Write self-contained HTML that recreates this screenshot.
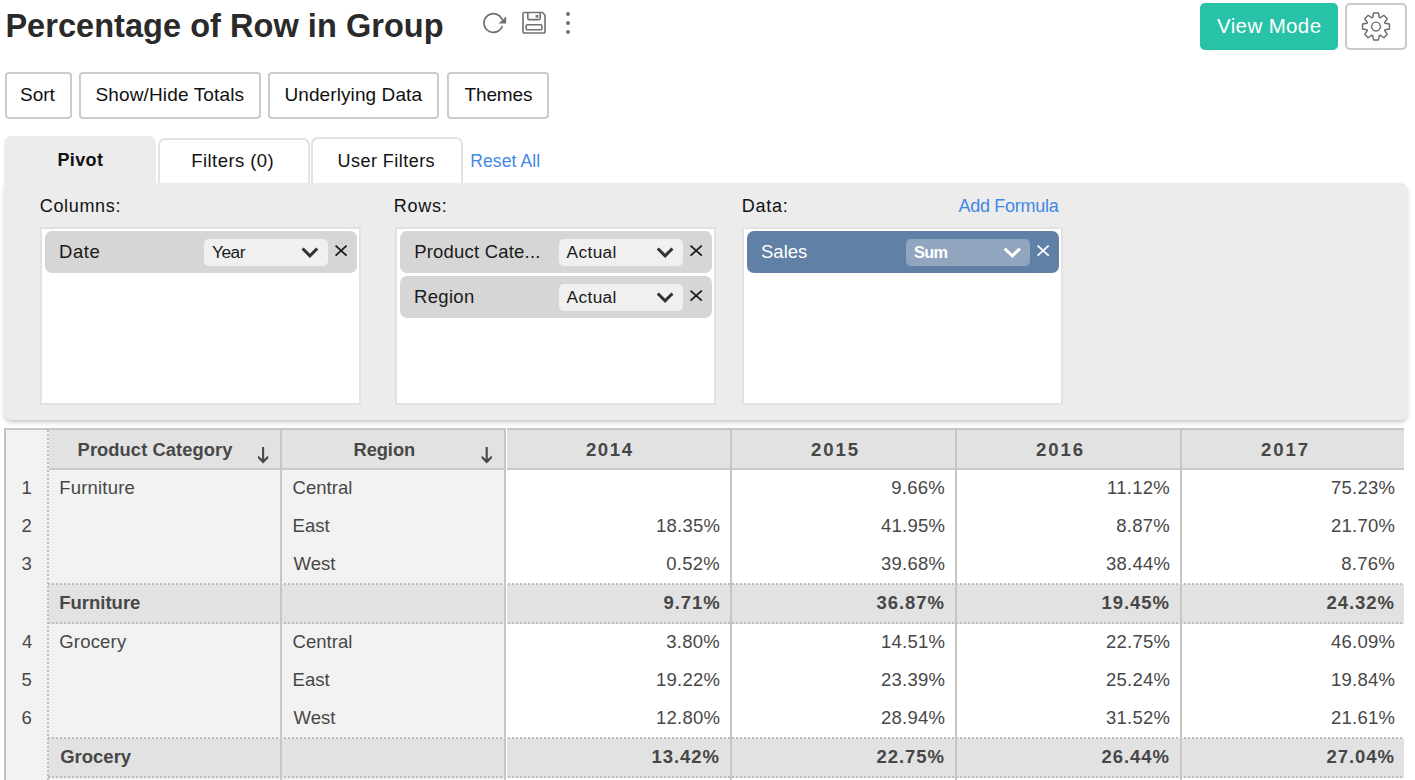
<!DOCTYPE html>
<html><head><meta charset="utf-8"><title>Percentage of Row in Group</title>
<style>
html,body{margin:0;padding:0;background:#fff;}
body{width:1415px;height:780px;overflow:hidden;position:relative;font-family:"Liberation Sans",sans-serif;}
.r{position:absolute;}
.t{position:absolute;white-space:nowrap;line-height:1;font-family:"Liberation Sans",sans-serif;}
svg.r{overflow:visible}
</style></head><body>
<div class="t" style="left:5.40px;top:10.00px;font-size:32.5px;font-weight:bold;letter-spacing:0.048px;color:#2a2a2a;">Percentage of Row in Group</div>
<svg class="r" style="left:0;top:0" width="600" height="50" viewBox="0 0 600 50">
<path d="M502.3 25.9 A9.35 9.35 0 1 1 502.22 19.9" fill="none" stroke="#707070" stroke-width="1.7"/>
<path d="M498.6 23.6 L506.2 23.6 L506.2 16.6 Z" fill="#707070"/>
<path d="M523.0 13.4 Q523.0 12.5 523.9 12.5 L542.4 12.5 L545.0 15.1 L545.0 32.1 Q545.0 33.0 544.1 33.0 L523.9 33.0 Q523.0 33.0 523.0 32.1 Z" fill="none" stroke="#707070" stroke-width="1.6"/>
<path d="M527.8 12.5 L527.8 18.6 Q527.8 19.6 528.8 19.6 L539.2 19.6 Q540.2 19.6 540.2 18.6 L540.2 12.5" fill="none" stroke="#707070" stroke-width="1.6"/>
<rect x="535.6" y="15.0" width="2.8" height="2.6" fill="#707070"/>
<rect x="526.1" y="24.8" width="15.8" height="5.0" rx="1.2" fill="none" stroke="#707070" stroke-width="1.6"/>
<circle cx="568" cy="14" r="2" fill="#707070"/>
<circle cx="568" cy="23" r="2" fill="#707070"/>
<circle cx="568" cy="32" r="2" fill="#707070"/>
</svg>
<div class="r" style="left:1200px;top:3px;width:138px;height:47px;background:#27c2a8;border-radius:5px"></div>
<div class="t" style="left:1217.00px;top:16.40px;font-size:20.5px;font-weight:normal;letter-spacing:0.375px;color:#ffffff;">View Mode</div>
<div class="r" style="left:1345px;top:3px;width:62px;height:47px;box-sizing:border-box;border:2px solid #c9c9c9;border-radius:5px;background:#fff"></div>
<svg class="r" style="left:0;top:0" width="1415" height="60" viewBox="0 0 1415 60">
<path d="M1372.33 17.63 L1372.67 17.50 L1373.56 13.02 L1378.44 13.02 L1379.33 17.50 L1379.67 17.63 L1380.01 17.78 L1383.81 15.24 L1387.26 18.69 L1384.72 22.49 L1384.87 22.83 L1385.00 23.17 L1389.48 24.06 L1389.48 28.94 L1385.00 29.83 L1384.87 30.17 L1384.72 30.51 L1387.26 34.31 L1383.81 37.76 L1380.01 35.22 L1379.67 35.37 L1379.33 35.50 L1378.44 39.98 L1373.56 39.98 L1372.67 35.50 L1372.33 35.37 L1371.99 35.22 L1368.19 37.76 L1364.74 34.31 L1367.28 30.51 L1367.13 30.17 L1367.00 29.83 L1362.52 28.94 L1362.52 24.06 L1367.00 23.17 L1367.13 22.83 L1367.28 22.49 L1364.74 18.69 L1368.19 15.24 L1371.99 17.78 Z" fill="none" stroke="#6e6e6e" stroke-width="1.45" stroke-linejoin="round"/>
<circle cx="1376" cy="26.5" r="4.4" fill="none" stroke="#6e6e6e" stroke-width="1.45"/>
</svg>
<div class="r" style="left:5px;top:72px;width:67px;height:47px;box-sizing:border-box;border:2px solid #cbcbcb;border-radius:4px;background:#fff"></div>
<div class="t" style="left:20.00px;top:85.00px;font-size:19px;font-weight:normal;letter-spacing:0.000px;color:#111;">Sort</div>
<div class="r" style="left:79px;top:72px;width:182px;height:47px;box-sizing:border-box;border:2px solid #cbcbcb;border-radius:4px;background:#fff"></div>
<div class="t" style="left:95.40px;top:85.00px;font-size:19px;font-weight:normal;letter-spacing:0.147px;color:#111;">Show/Hide Totals</div>
<div class="r" style="left:268px;top:72px;width:171px;height:47px;box-sizing:border-box;border:2px solid #cbcbcb;border-radius:4px;background:#fff"></div>
<div class="t" style="left:284.40px;top:85.00px;font-size:19px;font-weight:normal;letter-spacing:0.100px;color:#111;">Underlying Data</div>
<div class="r" style="left:447px;top:72px;width:102px;height:47px;box-sizing:border-box;border:2px solid #cbcbcb;border-radius:4px;background:#fff"></div>
<div class="t" style="left:464.60px;top:85.00px;font-size:19px;font-weight:normal;letter-spacing:-0.160px;color:#111;">Themes</div>
<div class="r" style="left:4px;top:136px;width:152px;height:54px;background:#ececec;border-radius:7px 7px 0 0"></div>
<div class="r" style="left:158px;top:138px;width:152px;height:52px;box-sizing:border-box;border:2px solid #e2e2e2;border-bottom:none;border-radius:7px 7px 0 0;background:#fff"></div>
<div class="r" style="left:311px;top:137px;width:152px;height:53px;box-sizing:border-box;border:2px solid #e2e2e2;border-bottom:none;border-radius:7px 7px 0 0;background:#fff"></div>
<div class="t" style="left:57.40px;top:151.30px;font-size:18px;font-weight:bold;letter-spacing:0.400px;color:#111;">Pivot</div>
<div class="t" style="left:191.30px;top:151.60px;font-size:18.5px;font-weight:normal;letter-spacing:0.430px;color:#111;">Filters (0)</div>
<div class="t" style="left:337.60px;top:151.80px;font-size:18px;font-weight:normal;letter-spacing:0.455px;color:#111;">User Filters</div>
<div class="t" style="left:470.30px;top:153.00px;font-size:17.5px;font-weight:normal;letter-spacing:0.087px;color:#4288e4;">Reset All</div>
<div class="r" style="left:4px;top:183px;width:1404px;height:237px;background:#ececec;border-radius:0 8px 8px 8px;box-shadow:0 3px 5px -1px rgba(0,0,0,0.24)"></div>
<div class="t" style="left:39.80px;top:197.20px;font-size:18px;font-weight:normal;letter-spacing:0.657px;color:#111;">Columns:</div>
<div class="t" style="left:393.80px;top:197.20px;font-size:18px;font-weight:normal;letter-spacing:0.750px;color:#111;">Rows:</div>
<div class="t" style="left:741.70px;top:197.20px;font-size:18px;font-weight:normal;letter-spacing:0.750px;color:#111;">Data:</div>
<div class="t" style="left:958.50px;top:197.20px;font-size:18px;font-weight:normal;letter-spacing:-0.290px;color:#4288e4;">Add Formula</div>
<div class="r" style="left:40px;top:227px;width:321px;height:178px;box-sizing:border-box;border:2px solid #e2e2e2;background:#fff"></div>
<div class="r" style="left:395px;top:227px;width:321px;height:178px;box-sizing:border-box;border:2px solid #e2e2e2;background:#fff"></div>
<div class="r" style="left:742px;top:227px;width:321px;height:178px;box-sizing:border-box;border:2px solid #e2e2e2;background:#fff"></div>
<div class="r" style="left:45px;top:231px;width:312px;height:42px;background:#d6d6d6;border-radius:7px"></div>
<div class="r" style="left:204px;top:239px;width:124px;height:27px;background:#f0f0f0;border-radius:5px"></div>
<div class="t" style="left:59.00px;top:243.20px;font-size:18.5px;font-weight:normal;letter-spacing:0.567px;color:#1a1a1a;">Date</div>
<div class="t" style="left:212.00px;top:243.90px;font-size:17.3px;font-weight:normal;letter-spacing:-0.500px;color:#1a1a1a;">Year</div>
<div class="r" style="left:400px;top:231px;width:312px;height:42px;background:#d6d6d6;border-radius:7px"></div>
<div class="r" style="left:559px;top:239px;width:124px;height:27px;background:#f0f0f0;border-radius:5px"></div>
<div class="t" style="left:414.20px;top:243.20px;font-size:18.5px;font-weight:normal;letter-spacing:0.200px;color:#1a1a1a;">Product Cate...</div>
<div class="t" style="left:566.60px;top:243.90px;font-size:17.3px;font-weight:normal;letter-spacing:0.360px;color:#1a1a1a;">Actual</div>
<div class="r" style="left:400px;top:276px;width:312px;height:42px;background:#d6d6d6;border-radius:7px"></div>
<div class="r" style="left:559px;top:284px;width:124px;height:27px;background:#f0f0f0;border-radius:5px"></div>
<div class="t" style="left:414.00px;top:288.20px;font-size:18.5px;font-weight:normal;letter-spacing:0.320px;color:#1a1a1a;">Region</div>
<div class="t" style="left:566.60px;top:288.90px;font-size:17.3px;font-weight:normal;letter-spacing:0.360px;color:#1a1a1a;">Actual</div>
<div class="r" style="left:747px;top:231px;width:312px;height:42px;background:#6080a6;border-radius:7px"></div>
<div class="r" style="left:906px;top:239px;width:124px;height:27px;background:#91a6be;border-radius:5px"></div>
<div class="t" style="left:761.00px;top:243.20px;font-size:18.5px;font-weight:normal;letter-spacing:0.000px;color:#ffffff;">Sales</div>
<div class="t" style="left:914.00px;top:243.50px;font-size:16.3px;font-weight:bold;letter-spacing:-0.700px;color:#ffffff;">Sum</div>
<svg class="r" style="left:0;top:0" width="1415" height="420" viewBox="0 0 1415 420"><path d="M302.56 248.56 L309.90 255.88 L317.24 248.56" fill="none" stroke="#333333" stroke-width="3.0" stroke-linecap="butt" stroke-linejoin="miter"/><path d="M335.6 245.6 L346.6 255.6 M346.6 245.6 L335.6 255.6" fill="none" stroke="#1a1a1a" stroke-width="1.8"/><path d="M657.76 248.56 L665.10 255.88 L672.44 248.56" fill="none" stroke="#333333" stroke-width="3.0" stroke-linecap="butt" stroke-linejoin="miter"/><path d="M690.5 245.6 L701.8 255.6 M701.8 245.6 L690.5 255.6" fill="none" stroke="#1a1a1a" stroke-width="1.8"/><path d="M657.76 293.56 L665.10 300.88 L672.44 293.56" fill="none" stroke="#333333" stroke-width="3.0" stroke-linecap="butt" stroke-linejoin="miter"/><path d="M690.5 290.6 L701.8 300.6 M701.8 290.6 L690.5 300.6" fill="none" stroke="#1a1a1a" stroke-width="1.8"/><path d="M1004.66 248.56 L1012.30 255.88 L1019.94 248.56" fill="none" stroke="#ffffff" stroke-width="3.0" stroke-linecap="butt" stroke-linejoin="miter"/><path d="M1037.6 245.6 L1048.7 255.6 M1048.7 245.6 L1037.6 255.6" fill="none" stroke="#ffffff" stroke-width="1.8"/></svg>
<div class="r" style="left:4px;top:428px;width:1400px;height:352px;background:#fff"></div>
<div class="r" style="left:4px;top:428px;width:2px;height:352px;background:#c2c2c2"></div>
<div class="r" style="left:4px;top:428px;width:1400px;height:2px;background:#c6c6c6"></div>
<div class="r" style="left:6px;top:430px;width:42px;height:350px;background:#f2f2f2"></div>
<div class="r" style="left:49px;top:430px;width:1355px;height:38px;background:#e2e2e2"></div>
<div class="r" style="left:48px;top:468px;width:1356px;height:2px;background:#c9c9c9"></div>
<div class="r" style="left:48px;top:470px;width:457px;height:310px;background:#f2f2f2"></div>
<div class="r" style="left:48px;top:430px;width:1px;height:40px;background:#f2f2f2"></div>
<div class="r" style="left:48px;top:584px;width:1356px;height:40px;background:#e2e2e2"></div>
<div class="r" style="left:48px;top:583px;width:1356px;height:2px;background-image:repeating-linear-gradient(90deg,#bdbdbd 0 2px,transparent 2px 4px)"></div>
<div class="r" style="left:48px;top:622px;width:1356px;height:2px;background-image:repeating-linear-gradient(90deg,#bdbdbd 0 2px,transparent 2px 4px)"></div>
<div class="r" style="left:48px;top:738px;width:1356px;height:40px;background:#e2e2e2"></div>
<div class="r" style="left:48px;top:737px;width:1356px;height:2px;background-image:repeating-linear-gradient(90deg,#bdbdbd 0 2px,transparent 2px 4px)"></div>
<div class="r" style="left:48px;top:776px;width:1356px;height:2px;background-image:repeating-linear-gradient(90deg,#bdbdbd 0 2px,transparent 2px 4px)"></div>
<div class="r" style="left:47px;top:430px;width:2px;height:350px;background-image:repeating-linear-gradient(180deg,#bdbdbd 0 2px,transparent 2px 4px)"></div>
<div class="r" style="left:280px;top:430px;width:2px;height:350px;background:#c6c6c6"></div>
<div class="r" style="left:504px;top:430px;width:2px;height:350px;background:#c6c6c6"></div>
<div class="r" style="left:730px;top:430px;width:2px;height:350px;background:#c6c6c6"></div>
<div class="r" style="left:955px;top:430px;width:2px;height:350px;background:#c6c6c6"></div>
<div class="r" style="left:1180px;top:430px;width:2px;height:350px;background:#c6c6c6"></div>
<div class="r" style="left:506px;top:428px;width:1px;height:352px;background:#fff"></div>
<div class="t" style="left:77.60px;top:440.90px;font-size:18.3px;font-weight:bold;letter-spacing:0.093px;color:#474747;">Product Category</div>
<div class="t" style="left:353.50px;top:440.90px;font-size:18.3px;font-weight:bold;letter-spacing:-0.060px;color:#474747;">Region</div>
<div class="t" style="left:585.90px;top:440.80px;font-size:18.6px;font-weight:bold;letter-spacing:1.633px;color:#474747;">2014</div>
<div class="t" style="left:810.90px;top:440.80px;font-size:18.6px;font-weight:bold;letter-spacing:1.967px;color:#474747;">2015</div>
<div class="t" style="left:1035.90px;top:440.80px;font-size:18.6px;font-weight:bold;letter-spacing:1.967px;color:#474747;">2016</div>
<div class="t" style="left:1260.90px;top:440.80px;font-size:18.6px;font-weight:bold;letter-spacing:1.967px;color:#474747;">2017</div>
<svg class="r" style="left:0;top:420px" width="1415" height="60" viewBox="0 420 1415 60"><rect x="262.05" y="447" width="2.1" height="13" fill="#474747"/><path d="M258.00 455.6 L263.10 459.9 L268.20 455.6 L268.20 458.3 L263.10 463.6 L258.00 458.3 Z" fill="#474747"/><rect x="485.65" y="447" width="2.1" height="13" fill="#474747"/><path d="M481.60 455.6 L486.70 459.9 L491.80 455.6 L491.80 458.3 L486.70 463.6 L481.60 458.3 Z" fill="#474747"/></svg>
<div class="t" style="left:21.50px;top:479.20px;font-size:18.5px;font-weight:normal;letter-spacing:0.000px;color:#474747;">1</div>
<div class="t" style="left:59.20px;top:479.20px;font-size:18.5px;font-weight:normal;letter-spacing:0.200px;color:#474747;">Furniture</div>
<div class="t" style="left:292.50px;top:479.20px;font-size:18.5px;font-weight:normal;letter-spacing:0.050px;color:#474747;">Central</div>
<div class="t" style="left:891.30px;top:479.20px;font-size:18.5px;font-weight:normal;letter-spacing:0.250px;color:#474747;">9.66%</div>
<div class="t" style="left:1107.05px;top:479.20px;font-size:18.5px;font-weight:normal;letter-spacing:0.250px;color:#474747;">11.12%</div>
<div class="t" style="left:1331.05px;top:479.20px;font-size:18.5px;font-weight:normal;letter-spacing:0.250px;color:#474747;">75.23%</div>
<div class="t" style="left:21.50px;top:517.20px;font-size:18.5px;font-weight:normal;letter-spacing:0.000px;color:#474747;">2</div>
<div class="t" style="left:292.50px;top:517.20px;font-size:18.5px;font-weight:normal;letter-spacing:0.050px;color:#474747;">East</div>
<div class="t" style="left:656.05px;top:517.20px;font-size:18.5px;font-weight:normal;letter-spacing:0.250px;color:#474747;">18.35%</div>
<div class="t" style="left:881.05px;top:517.20px;font-size:18.5px;font-weight:normal;letter-spacing:0.250px;color:#474747;">41.95%</div>
<div class="t" style="left:1116.30px;top:517.20px;font-size:18.5px;font-weight:normal;letter-spacing:0.250px;color:#474747;">8.87%</div>
<div class="t" style="left:1331.05px;top:517.20px;font-size:18.5px;font-weight:normal;letter-spacing:0.250px;color:#474747;">21.70%</div>
<div class="t" style="left:21.50px;top:555.20px;font-size:18.5px;font-weight:normal;letter-spacing:0.000px;color:#474747;">3</div>
<div class="t" style="left:293.50px;top:555.20px;font-size:18.5px;font-weight:normal;letter-spacing:0.050px;color:#474747;">West</div>
<div class="t" style="left:666.30px;top:555.20px;font-size:18.5px;font-weight:normal;letter-spacing:0.250px;color:#474747;">0.52%</div>
<div class="t" style="left:881.05px;top:555.20px;font-size:18.5px;font-weight:normal;letter-spacing:0.250px;color:#474747;">39.68%</div>
<div class="t" style="left:1106.05px;top:555.20px;font-size:18.5px;font-weight:normal;letter-spacing:0.250px;color:#474747;">38.44%</div>
<div class="t" style="left:1341.30px;top:555.20px;font-size:18.5px;font-weight:normal;letter-spacing:0.250px;color:#474747;">8.76%</div>
<div class="t" style="left:59.20px;top:593.70px;font-size:18.5px;font-weight:bold;letter-spacing:0.000px;color:#474747;">Furniture</div>
<div class="t" style="left:663.50px;top:593.70px;font-size:18.5px;font-weight:bold;letter-spacing:0.950px;color:#474747;">9.71%</div>
<div class="t" style="left:876.55px;top:593.70px;font-size:18.5px;font-weight:bold;letter-spacing:0.950px;color:#474747;">36.87%</div>
<div class="t" style="left:1101.55px;top:593.70px;font-size:18.5px;font-weight:bold;letter-spacing:0.950px;color:#474747;">19.45%</div>
<div class="t" style="left:1326.55px;top:593.70px;font-size:18.5px;font-weight:bold;letter-spacing:0.950px;color:#474747;">24.32%</div>
<div class="t" style="left:22.00px;top:632.80px;font-size:18.5px;font-weight:normal;letter-spacing:0.000px;color:#474747;">4</div>
<div class="t" style="left:59.20px;top:632.80px;font-size:18.5px;font-weight:normal;letter-spacing:0.200px;color:#474747;">Grocery</div>
<div class="t" style="left:292.50px;top:632.80px;font-size:18.5px;font-weight:normal;letter-spacing:0.050px;color:#474747;">Central</div>
<div class="t" style="left:666.30px;top:632.80px;font-size:18.5px;font-weight:normal;letter-spacing:0.250px;color:#474747;">3.80%</div>
<div class="t" style="left:881.05px;top:632.80px;font-size:18.5px;font-weight:normal;letter-spacing:0.250px;color:#474747;">14.51%</div>
<div class="t" style="left:1106.05px;top:632.80px;font-size:18.5px;font-weight:normal;letter-spacing:0.250px;color:#474747;">22.75%</div>
<div class="t" style="left:1331.05px;top:632.80px;font-size:18.5px;font-weight:normal;letter-spacing:0.250px;color:#474747;">46.09%</div>
<div class="t" style="left:21.50px;top:670.80px;font-size:18.5px;font-weight:normal;letter-spacing:0.000px;color:#474747;">5</div>
<div class="t" style="left:292.50px;top:670.80px;font-size:18.5px;font-weight:normal;letter-spacing:0.050px;color:#474747;">East</div>
<div class="t" style="left:656.05px;top:670.80px;font-size:18.5px;font-weight:normal;letter-spacing:0.250px;color:#474747;">19.22%</div>
<div class="t" style="left:881.05px;top:670.80px;font-size:18.5px;font-weight:normal;letter-spacing:0.250px;color:#474747;">23.39%</div>
<div class="t" style="left:1106.05px;top:670.80px;font-size:18.5px;font-weight:normal;letter-spacing:0.250px;color:#474747;">25.24%</div>
<div class="t" style="left:1331.05px;top:670.80px;font-size:18.5px;font-weight:normal;letter-spacing:0.250px;color:#474747;">19.84%</div>
<div class="t" style="left:21.50px;top:708.90px;font-size:18.5px;font-weight:normal;letter-spacing:0.000px;color:#474747;">6</div>
<div class="t" style="left:293.50px;top:708.90px;font-size:18.5px;font-weight:normal;letter-spacing:0.050px;color:#474747;">West</div>
<div class="t" style="left:656.05px;top:708.90px;font-size:18.5px;font-weight:normal;letter-spacing:0.250px;color:#474747;">12.80%</div>
<div class="t" style="left:881.05px;top:708.90px;font-size:18.5px;font-weight:normal;letter-spacing:0.250px;color:#474747;">28.94%</div>
<div class="t" style="left:1106.05px;top:708.90px;font-size:18.5px;font-weight:normal;letter-spacing:0.250px;color:#474747;">31.52%</div>
<div class="t" style="left:1331.05px;top:708.90px;font-size:18.5px;font-weight:normal;letter-spacing:0.250px;color:#474747;">21.61%</div>
<div class="t" style="left:60.20px;top:747.80px;font-size:18.5px;font-weight:bold;letter-spacing:0.000px;color:#474747;">Grocery</div>
<div class="t" style="left:651.55px;top:747.80px;font-size:18.5px;font-weight:bold;letter-spacing:0.950px;color:#474747;">13.42%</div>
<div class="t" style="left:876.55px;top:747.80px;font-size:18.5px;font-weight:bold;letter-spacing:0.950px;color:#474747;">22.75%</div>
<div class="t" style="left:1101.55px;top:747.80px;font-size:18.5px;font-weight:bold;letter-spacing:0.950px;color:#474747;">26.44%</div>
<div class="t" style="left:1326.55px;top:747.80px;font-size:18.5px;font-weight:bold;letter-spacing:0.950px;color:#474747;">27.04%</div>
</body></html>
